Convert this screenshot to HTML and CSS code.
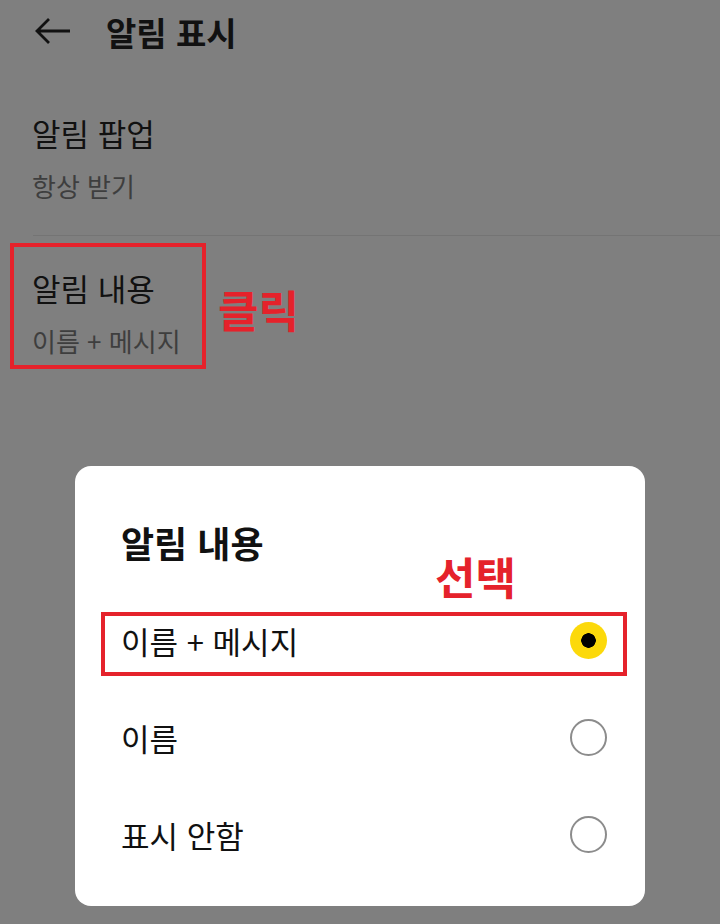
FILE: index.html
```html
<!DOCTYPE html>
<html lang="ko">
<head>
    <meta charset="UTF-8">
    <meta name="viewport" content="width=device-width, initial-scale=1.0">
    <title>알림 표시</title>
    <link rel="stylesheet" href="styles.css">
</head>
<body>
    <!-- En-tête -->
    <header class="top-bar">
        <svg class="back-icon" width="36" height="28" viewBox="0 0 36 28">
            <path d="M15 2 L3 14 L15 26 M3 14 H36" fill="none" stroke="#111" stroke-width="2.8"/>
        </svg>
        <h1 class="page-title">알림 표시</h1>
    </header>

    <!-- Réglages -->
    <div class="setting setting-first">
        <div class="setting-title">알림 팝업</div>
        <div class="setting-value">항상 받기</div>
    </div>
    <div class="divider"></div>
    <div class="setting setting-second">
        <div class="setting-title">알림 내용</div>
        <div class="setting-value">이름 + 메시지</div>
        <div class="mark-box mark-setting"></div>
        <span class="mark-label mark-click">클릭</span>
    </div>

    <!-- Boîte de dialogue -->
    <div class="dialog">
        <h2 class="dialog-title">알림 내용</h2>
        <span class="mark-label mark-select">선택</span>
        <div class="option">
            <span>이름 + 메시지</span>
            <span class="radio radio-on"></span>
        </div>
        <div class="option">
            <span>이름</span>
            <span class="radio"></span>
        </div>
        <div class="option">
            <span>표시 안함</span>
            <span class="radio"></span>
        </div>
        <div class="mark-box mark-option"></div>
    </div>
</body>
</html>
```

FILE: styles.css
```css
/* Style général */
body, html {
    margin: 0;
    padding: 0;
}

body {
    width: 720px;
    height: 924px;
    overflow: hidden;
    position: relative;
    background-color: #7f7f7f;
    color: #111;
    font-family: "Noto Sans CJK KR", "Noto Sans", sans-serif;
}

/* En-tête */
.top-bar {
    height: 64px;
    display: flex;
    align-items: center;
    padding-left: 34px;
}

.back-icon {
    display: block;
    margin-top: -2px;
}

.page-title {
    margin: 0 0 0 36px;
    font-size: 33px;
    font-weight: 700;
    line-height: 64px;
}

/* Réglages */
.setting {
    position: relative;
    padding-left: 32px;
}

.setting-first {
    padding-top: 49px;
    padding-bottom: 33px;
}

.setting-second {
    padding-top: 32px;
}

.setting-title {
    font-size: 31px;
    line-height: 40px;
}

.setting-value {
    margin-top: 17px;
    font-size: 26px;
    line-height: 32px;
    color: #3e3e3e;
}

.divider {
    height: 1px;
    margin-left: 33px;
    background-color: #747474;
}

/* Annotations rouges */
.mark-box {
    position: absolute;
    box-sizing: border-box;
    border: 4px solid #e5222b;
}

.mark-setting {
    top: 7px;
    left: 10px;
    width: 196px;
    height: 126px;
}

.mark-option {
    top: 146px;
    left: 26px;
    width: 526px;
    height: 64px;
}

.mark-label {
    position: absolute;
    color: #e5222b;
    font-size: 44px;
    font-weight: 700;
    line-height: 44px;
}

.mark-click {
    top: 51px;
    left: 218px;
}

.mark-select {
    top: 88px;
    left: 360px;
}

/* Boîte de dialogue */
.dialog {
    position: absolute;
    top: 466px;
    left: 75px;
    width: 570px;
    height: 440px;
    box-sizing: border-box;
    padding-top: 54px;
    background-color: #fff;
    border-radius: 16px;
}

.dialog-title {
    margin: 0 0 28px 46px;
    font-size: 36px;
    font-weight: 700;
    line-height: 44px;
}

.option {
    height: 97px;
    display: flex;
    align-items: center;
    justify-content: space-between;
    padding: 0 38px 0 46px;
    font-size: 31px;
}

.radio {
    width: 37px;
    height: 37px;
    box-sizing: border-box;
    border: 2px solid #8c8c8c;
    border-radius: 50%;
}

.radio-on {
    border: none;
    background: radial-gradient(circle, #000 0 7px, #fcd90b 7.5px);
}
```
